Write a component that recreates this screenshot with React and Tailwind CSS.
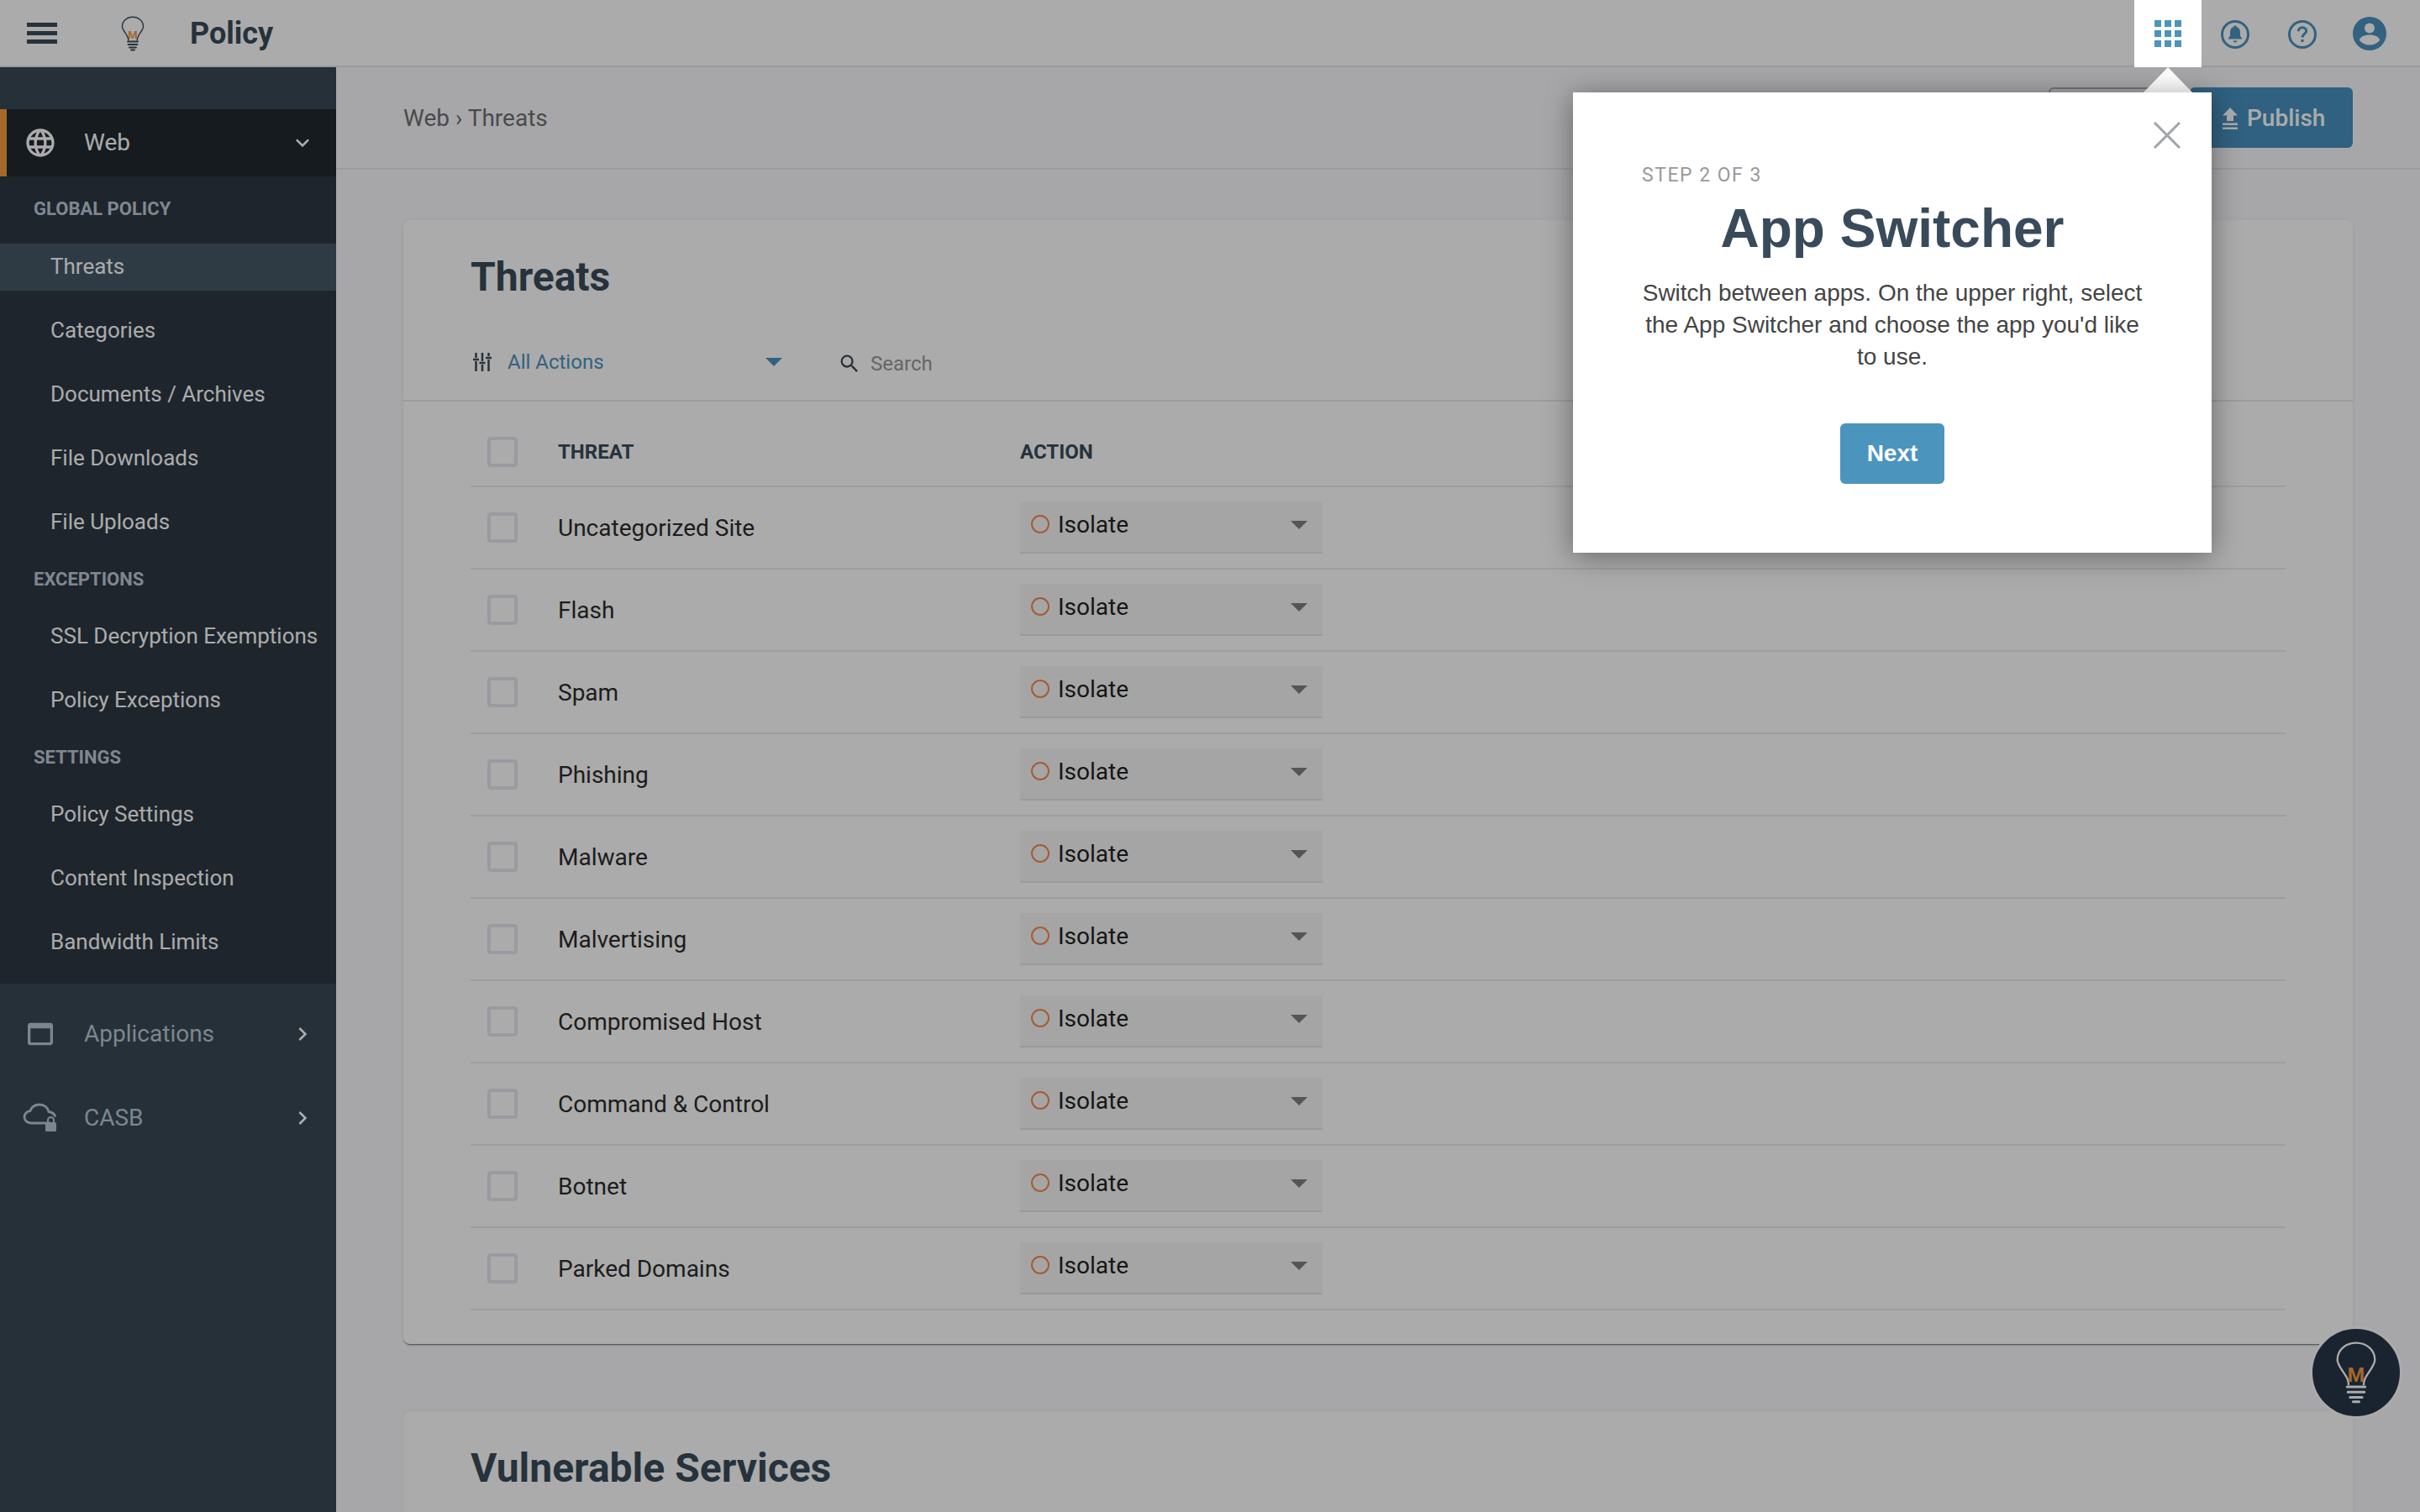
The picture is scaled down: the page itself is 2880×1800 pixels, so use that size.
import React from "react";
import { MdLanguage, MdWebAsset, MdExpandMore, MdChevronRight, MdSearch } from "react-icons/md";

const threats = ["Uncategorized Site","Flash","Spam","Phishing","Malware","Malvertising","Compromised Host","Command & Control","Botnet","Parked Domains"];

const Caret = ({ className }) => (
  <svg viewBox="0 0 20 10" className={className}><path d="M0 0h20L10 10z" fill="currentColor" /></svg>
);

const Bulb = ({ stroke, m, sw = 1.4 }) => (
  <svg viewBox="0 0 28 42" className="w-full h-full">
    <path d="M9 29.5c0-4-1.5-5.5-4-9.5C3 17 1.5 15 1.5 12.5 1.5 6 7 1.2 14 1.2S26.500 6 26.500 12.500c0 2.500-1.500 4.500-3.500 7.500-2.500 4-4 5.500-4 9.500" fill="none" stroke={stroke} strokeWidth={sw} />
    <path d="M8 30.500h12M8.500 34h11M10 37.500h8M12 40.500h4" stroke={stroke} strokeWidth={sw + 0.4} strokeLinecap="round" />
    <text x="14" y="27" textAnchor="middle" fontSize="13" fontWeight="700" fill={m} fontFamily="Roboto, sans-serif">M</text>
  </svg>
);

const Check = () => <div className="w-9 h-9 shrink-0 border-4 border-[#e6e8f0] rounded-[4px] bg-white" />;

const SideItem = ({ label, active }) => (
  <div className={`h-14 mb-5 pl-[60px] pb-px flex items-center text-[26px] text-white ${active ? "bg-[#465866]" : ""}`}>{label}</div>
);
const SideHead = ({ label }) => (
  <div className="h-[38px] mb-[22px] pl-10 flex items-center text-[22px] font-bold text-[#bfc9d7]">{label}</div>
);

const Row = ({ name }) => (
  <div className="h-[98px] border-b-2 border-[#ebebf0] flex items-center pl-5">
    <Check />
    <div className="w-[550px] ml-12 pt-[2px] text-[28px] text-[#2c2c2c]">{name}</div>
    <div className="w-[360px] h-[62px] bg-[#f7f7f7] border-b-2 border-[#e4e4ec] flex items-center pl-[13px] pr-[18px] pb-1">
      <div className="w-[22px] h-[22px] -mt-[2px] rounded-full border-2 border-[#f58a4e]" />
      <div className="ml-[10px] flex-1 text-[28px] text-[#222222]">Isolate</div>
      <Caret className="w-5 h-2.5 text-[#7f7f7f]" />
    </div>
  </div>
);

export default function App() {
  return (
    <div className="relative w-[2880px] h-[1800px] overflow-hidden flex flex-col bg-[#f9fafe] font-['Roboto',sans-serif]">
      {/* top bar */}
      <header className="h-20 shrink-0 bg-white border-b-2 border-[#e6e8f0] flex items-center">
        <div className="ml-8 w-9 flex flex-col gap-[5px]">
          <div className="h-[5px] bg-[#394b5a]" /><div className="h-[5px] bg-[#394b5a]" /><div className="h-[5px] bg-[#394b5a]" />
        </div>
        <div className="ml-[76px] w-7 h-[42px] mt-[2px]"><Bulb stroke="#394b5a" m="#f79b40" /></div>
        <div className="ml-[54px] mt-[2px] text-[36px] font-bold text-[#394b5a] leading-none">Policy</div>
        <div className="ml-auto flex items-center pr-5 h-20 self-start">
          <div className="relative z-20 w-20 h-20 bg-white flex items-center justify-center">
            <div className="grid grid-cols-3 gap-1">
              {Array.from({ length: 9 }).map((_, i) => <div key={i} className="w-2 h-2 bg-[#4b94bd]" />)}
            </div>
          </div>
          <div className="w-20 h-20 pt-[2px] flex items-center justify-center">
            <svg viewBox="0 0 36 36" className="w-9 h-9 text-[#4b92bf]">
              <circle cx="18" cy="18" r="15.500" fill="none" stroke="currentColor" strokeWidth="3" />
              <path d="M18 7.500c-1 0-1.700.7-1.700 1.600-3 .8-4.300 3.300-4.300 6.400v4l-2 3v1h16v-1l-2-3v-4c0-3.100-1.300-5.600-4.300-6.400 0-.9-.7-1.600-1.700-1.600zM15.500 25.500h5c0 1.200-1.100 2-2.500 2s-2.500-.8-2.500-2z" fill="currentColor" />
            </svg>
          </div>
          <div className="w-20 h-20 pt-[2px] flex items-center justify-center">
            <svg viewBox="0 0 36 36" className="w-9 h-9 text-[#4b92bf]">
              <circle cx="18" cy="18" r="15.500" fill="none" stroke="currentColor" strokeWidth="3" />
              <path d="M13.300 14.300c0-2.800 2-4.500 4.700-4.500s4.700 1.700 4.700 4.200c0 3.300-4.700 3.700-4.700 7.500" fill="none" stroke="currentColor" strokeWidth="3" />
              <rect x="16.500" y="24" width="3" height="3" fill="currentColor" />
            </svg>
          </div>
          <div className="w-20 h-20 flex items-center justify-center">
            <svg viewBox="0 0 40 40" className="w-10 h-10 text-[#4b92bf]">
              <circle cx="20" cy="20" r="20" fill="currentColor" />
              <circle cx="20" cy="13.500" r="6" fill="#ffffff" />
              <path d="M8 28c0-4 6-6.500 12-6.500S32 24 32 28c-2.500 3.500-7 5.500-12 5.500S10.500 31.500 8 28z" fill="#ffffff" />
            </svg>
          </div>
        </div>
      </header>

      <div className="flex-1 flex min-h-0">
        {/* sidebar */}
        <aside className="w-[400px] shrink-0 bg-[#394855]">
          <div className="h-[50px]" />
          <div className="h-20 bg-[#212930] border-l-8 border-[#f79b40] flex items-center text-white">
            <MdLanguage className="w-10 h-10 ml-5 shrink-0" />
            <div className="ml-8 flex-1 text-[28px]">Web</div>
            <MdExpandMore className="w-8 h-8 mr-6" />
          </div>
          <div className="bg-[#2d3842] pt-[19px] pb-px">
            <SideHead label="GLOBAL POLICY" />
            <div className="h-px" />
            <SideItem label="Threats" active />
            <SideItem label="Categories" />
            <SideItem label="Documents / Archives" />
            <SideItem label="File Downloads" />
            <SideItem label="File Uploads" />
            <SideHead label="EXCEPTIONS" />
            <SideItem label="SSL Decryption Exemptions" />
            <SideItem label="Policy Exceptions" />
            <SideHead label="SETTINGS" />
            <SideItem label="Policy Settings" />
            <SideItem label="Content Inspection" />
            <SideItem label="Bandwidth Limits" />
          </div>
          <div className="h-2.5" />
          <div className="h-[100px] flex items-center text-[#b9c8d4]">
            <MdWebAsset className="w-10 h-10 ml-7 shrink-0" />
            <div className="ml-[32px] flex-1 text-[28px]">Applications</div>
            <MdChevronRight className="w-8 h-8 mr-6 text-white" />
          </div>
          <div className="h-[100px] flex items-center text-[#b9c8d4]">
            <svg viewBox="0 0 42 36" className="w-[42px] h-9 ml-[27px] shrink-0">
              <path d="M33 24H10C5.500 24 2 20.800 2 16.800 2 13 5 10 8.800 9.600 10.500 5 14.800 2 20 2c5.500 0 10 3.600 11 8.500 3.500.5 7 2.800 8 6" fill="none" stroke="currentColor" strokeWidth="2.800" />
              <rect x="27" y="23" width="13" height="11" rx="1.500" fill="currentColor" />
              <path d="M30 23v-2.500a3.500 3.500 0 0 1 7 0V23" fill="none" stroke="currentColor" strokeWidth="2" />
            </svg>
            <div className="ml-[31px] flex-1 text-[28px]">CASB</div>
            <MdChevronRight className="w-8 h-8 mr-6 text-white" />
          </div>
        </aside>

        {/* main */}
        <main className="flex-1 min-w-0">
          <div className="h-[122px] border-b-2 border-[#e6e8f0] flex items-center pl-20 pr-20">
            <div className="text-[28px] text-[#6f6f6f] mt-px">Web › Threats</div>
            <div className="ml-auto flex items-center gap-4">
              <div className="w-[152px] h-[72px] border-2 border-[#b0b0b0] rounded-[6px]" />
              <div className="w-[194px] h-[72px] pt-px bg-[#4891bf] rounded-[6px] flex items-center pl-[39px] text-white text-[28px] font-medium">
                <svg viewBox="0 0 18 26" className="w-[18px] h-[26px] mr-[11px]"><path d="M9 0l9 9.500h-5V16H5V9.500H0zM0 18.500h18V21H0zM0 23.500h18V26H0z" fill="currentColor" /></svg>
                Publish
              </div>
            </div>
          </div>

          <section className="mx-20 mt-[60px] bg-white rounded-[8px] shadow-[0_2px_2px_-1px_rgba(0,0,0,0.6),0_0_6px_rgba(0,0,0,0.06)] pb-10">
            <div className="h-[216px] border-b-2 border-[#e6e8f0] px-20 flex flex-col">
              <h2 className="mt-[40px] h-14 flex items-center text-[48px] font-bold text-[#394b5a]">Threats</h2>
              <div className="mt-[53px] flex items-center">
                <svg viewBox="0 0 22 22" className="ml-[3px] w-[22px] h-[22px] text-[#394b5a]">
                  <path d="M3.500 0v6M3.500 10v12M11 0v10M11 14v8M18.500 0v4M18.500 8v14M0 8h7M7.500 12h7M15 6h7" stroke="currentColor" strokeWidth="2.500" fill="none" />
                </svg>
                <div className="ml-[19px] w-[307px] text-[24px] text-[#4b92bf]">All Actions</div>
                <Caret className="w-5 h-2.5 text-[#4b92bf]" />
                <MdSearch className="ml-[66px] w-7 h-7 text-[#394b5a] mt-1" />
                <div className="ml-[11px] text-[24px] text-[#999999] mt-1">Search</div>
              </div>
            </div>
            <div className="mx-20">
              <div className="h-[102px] pt-5 border-b-2 border-[#ebebf0] flex items-center pl-5 text-[24px] font-bold text-[#394b5a]">
                <Check />
                <div className="w-[550px] ml-12">THREAT</div>
                <div>ACTION</div>
              </div>
              {threats.map((t) => <Row key={t} name={t} />)}
            </div>
          </section>

          <section className="mx-20 mt-20 bg-white rounded-[8px] shadow-[0_0_6px_rgba(0,0,0,0.06)] px-20 pt-10 h-[300px]">
            <h2 className="h-14 flex items-center text-[48px] font-bold text-[#394b5a]">Vulnerable Services</h2>
          </section>
        </main>
      </div>

      {/* floating help button */}
      <div className="absolute left-[2749px] top-[1579px] w-[110px] h-[110px] rounded-full bg-[#28364a] border-[3px] border-white flex items-center justify-center">
        <div className="w-[50px] h-[78px]"><Bulb stroke="#ffffff" m="#f79b40" sw={1.3} /></div>
      </div>

      {/* dim overlay */}
      <div className="absolute inset-0 z-10 bg-black/33" />

      {/* popover */}
      <div className="absolute z-20 left-[2550px] top-20 w-[60px] h-[31px] bg-white [clip-path:polygon(50%_0,100%_100%,0_100%)]" />
      <div className="absolute z-20 left-[1872px] top-[110px] w-[760px] h-[548px] bg-white shadow-[0_4px_32px_rgba(0,0,0,0.4)] px-[82px] pt-[85px] text-center font-['Liberation_Sans',sans-serif]">
        <svg viewBox="0 0 32 32" className="absolute left-[691px] top-[35px] w-8 h-8 text-[#a0a3a8]">
          <path d="M1 1l30 30M31 1L1 31" stroke="currentColor" strokeWidth="3" fill="none" />
        </svg>
        <div className="h-7 flex items-center text-[23px] text-[#999999] tracking-[1.5px] font-['Roboto',sans-serif] text-left">STEP 2 OF 3</div>
        <h1 className="mt-[13px] h-[72px] flex items-center justify-center text-[64px] font-bold text-[#394b5a]">App Switcher</h1>
        <p className="mt-[22px] text-[28px] leading-[38px] text-[#444444]">Switch between apps. On the upper right, select the App Switcher and choose the app you'd like to use.</p>
        <button className="mt-[60px] w-[124px] h-[72px] rounded-[6px] bg-[#4b94bd] text-white text-[28px] font-bold">Next</button>
      </div>
    </div>
  );
}
